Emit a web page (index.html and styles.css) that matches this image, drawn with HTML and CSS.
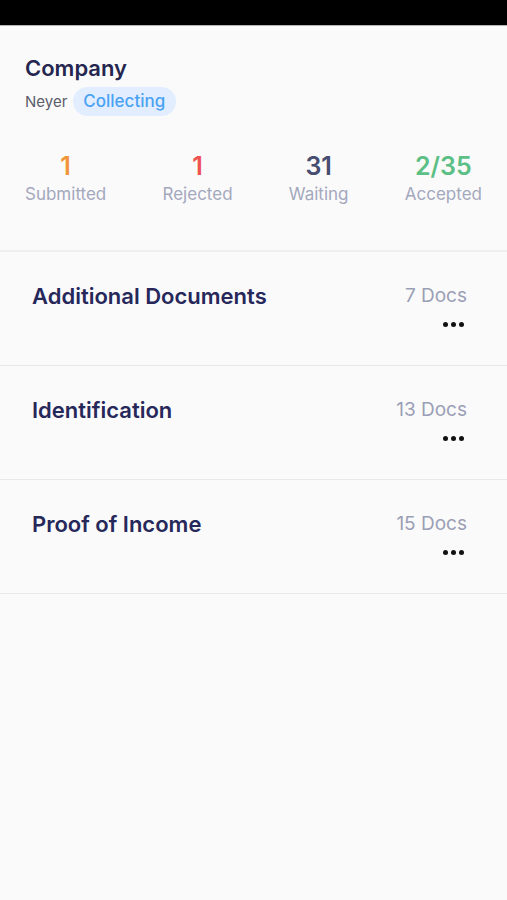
FILE: index.html
```html
<!DOCTYPE html>
<html lang="en">
<head>
  <meta charset="UTF-8">
  <meta name="viewport" content="width=device-width, initial-scale=1.0">
  <title>Company - Documents</title>
  <link rel="stylesheet" href="styles.css">
</head>
<body>
  <div class="topbar"></div>
  <header class="summary">
    <h1>Company</h1>
    <div class="meta">
      <span class="owner">Neyer</span>
      <span class="status">Collecting</span>
    </div>
    <div class="stats">
      <div class="stat"><span class="num submitted">1</span><span class="label">Submitted</span></div>
      <div class="stat"><span class="num rejected">1</span><span class="label">Rejected</span></div>
      <div class="stat"><span class="num waiting">31</span><span class="label">Waiting</span></div>
      <div class="stat"><span class="num accepted">2/35</span><span class="label">Accepted</span></div>
    </div>
  </header>
  <ul class="groups">
    <li class="group">
      <span class="name">Additional Documents</span>
      <div class="side">
        <span class="count">7 Docs</span>
        <span class="more"><i></i><i></i><i></i></span>
      </div>
    </li>
    <li class="group">
      <span class="name">Identification</span>
      <div class="side">
        <span class="count">13 Docs</span>
        <span class="more"><i></i><i></i><i></i></span>
      </div>
    </li>
    <li class="group">
      <span class="name">Proof of Income</span>
      <div class="side">
        <span class="count">15 Docs</span>
        <span class="more"><i></i><i></i><i></i></span>
      </div>
    </li>
  </ul>
</body>
</html>
```

FILE: styles.css
```css
* { margin: 0; padding: 0; box-sizing: border-box; font-family: 'Inter', sans-serif; }
html, body { height: 100%; }
body { background: #fafafa; color: #27285a; }

.topbar { height: 26px; background: #000; border-bottom: 1px solid #b5b5b5; }

.summary { padding: 28px 25px 45px; border-bottom: 2px solid #efefef; }
.summary h1 { font-size: 22px; font-weight: 600; line-height: 28px; color: #25264f; }
.meta { display: flex; align-items: center; gap: 6px; margin-top: 5px; }
.owner { font-size: 15px; color: #5b5d6b; }
.status { background: #e2eeff; color: #4aa2f2; font-size: 17px; font-weight: 500; line-height: 29px; padding: 0 11px 0 10px; border-radius: 15px; }

.stats { display: flex; justify-content: space-between; margin-top: 36px; }
.stat { display: flex; flex-direction: column; align-items: center; }
.num { font-size: 25px; font-weight: 600; line-height: 28px; }
.label { font-size: 17px; color: #a4a8bd; line-height: 22px; margin-top: 3px; }
.submitted { color: #f2953a; }
.rejected { color: #ef5350; }
.waiting { color: #474d6e; }
.accepted { color: #5cbf85; }

.groups { list-style: none; }
.group { display: flex; justify-content: space-between; align-items: flex-start; height: 114px; padding: 31px 40px 0 32px; border-bottom: 1px solid #e8e8ea; }
.name { font-size: 22px; font-weight: 600; color: #27285a; line-height: 26px; }
.side { display: flex; flex-direction: column; align-items: flex-end; }
.count { font-size: 19px; color: #9a9fb6; line-height: 26px; }
.more { display: flex; gap: 3px; margin-top: 13px; margin-right: 3px; }
.more i { width: 5px; height: 5px; border-radius: 50%; background: #111; }
```
